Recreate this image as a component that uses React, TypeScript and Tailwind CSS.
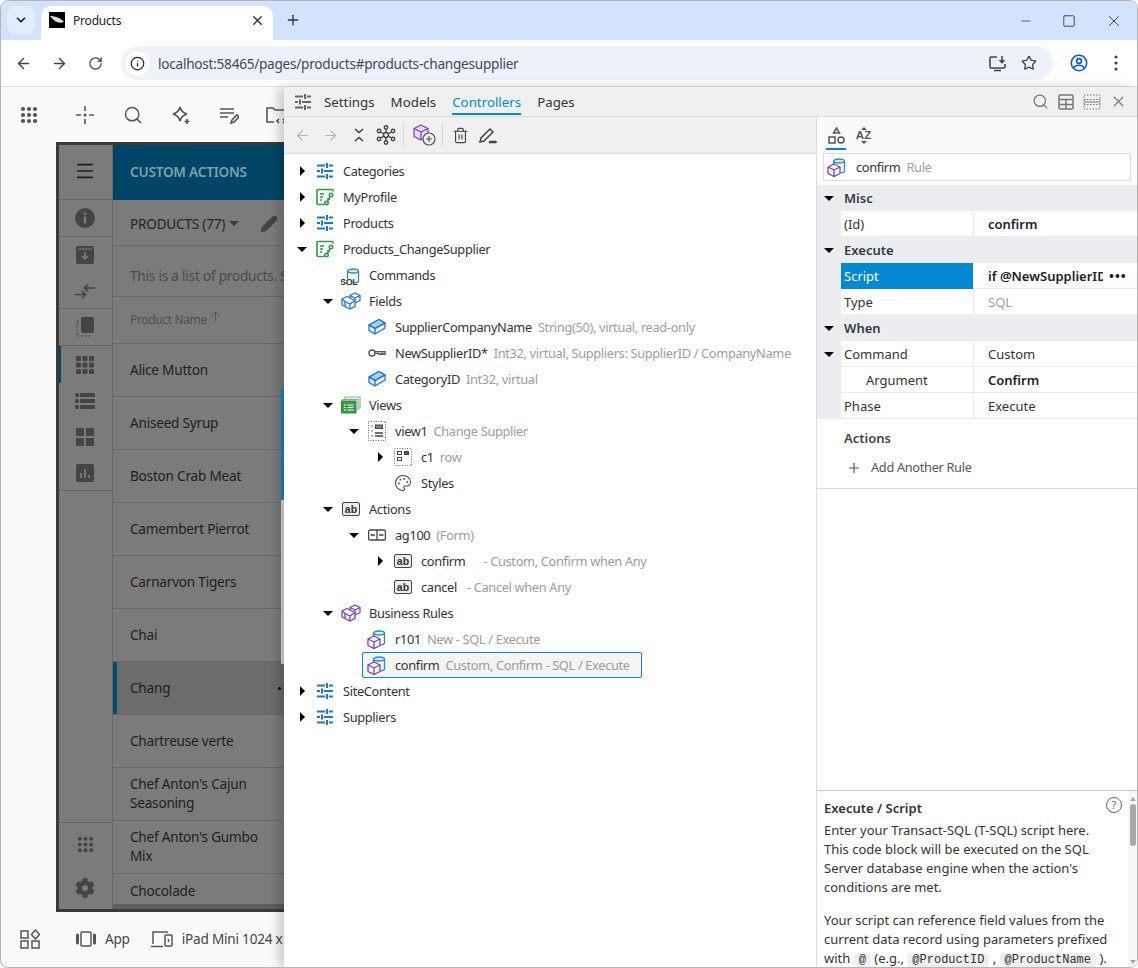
import React from "react";
import { ArrowLeft, ArrowRight, RotateCw, Info, Star, X, Plus, ChevronDown, Minus, Square, Search, Palette, Trash2, Menu, Pencil, ArrowUp } from "lucide-react";
import { FaCog } from "react-icons/fa";

const Slider = ({ c = "#1b76c9" }: { c?: string }) => (
  <svg width="18" height="18" viewBox="0 0 18 18" fill="none" stroke={c} strokeWidth="2">
    <path d="M1 3.500h8M13 3.500h4M11 1v5M1 9h3M8 9h9M6 6.500v5M1 14.500h8M13 14.500h4M11 12v5" />
  </svg>
);
const Ctrl = () => (
  <svg width="18" height="18" viewBox="0 0 18 18" fill="none" stroke="#2e9a3c" strokeWidth="1.600">
    <path d="M8 16.500H2a1 1 0 0 1-1-1v-13a1 1 0 0 1 1-1h14a1 1 0 0 1 1 1v1" />
    <path d="M4 6h4M4 9h3M4 12h2" />
    <circle cx="15" cy="7" r="1.700" /><circle cx="10.500" cy="15" r="1.700" /><path d="M14 8.500l-2.500 5M11 11h3" />
  </svg>
);
const Cyl = ({ c = "#2b8db5", y = 0 }: { c?: string; y?: number }) => (
  <g transform={`translate(0 ${y})`} fill="none" stroke={c} strokeWidth="1.300">
    <ellipse cx="12" cy="3" rx="5.500" ry="2" fill="#d4e9f3" />
    <path d="M6.500 3v8M17.500 3v10c0 1-1 1.600-4 1.800" />
  </g>
);
const SqlIcon = () => (
  <svg width="20" height="20" viewBox="0 0 20 20" className="shrink-0">
    <Cyl y={3} />
    <text x="-1" y="19.500" fontSize="9" fontWeight="600" fill="#333" fontFamily="Liberation Sans, sans-serif">SQL</text>
  </svg>
);
const Cube = ({ x = 0, y = 0, c, f = "none" }: { x?: number; y?: number; c: string; f?: string }) => (
  <g transform={`translate(${x} ${y})`} fill="none" stroke={c} strokeWidth="1.300" strokeLinejoin="round">
    <path d="M6 0l6 3v6.500l-6 3-6-3V3z" fill={f} /><path d="M0 3l6 3 6-3M6 6v6.500" />
  </g>
);
const TwoCubes = ({ c, f }: { c: string; f: string }) => (
  <svg width="20" height="18" viewBox="0 0 20 18" className="shrink-0">
    <g fill={f} stroke={c} strokeWidth="1.300" strokeLinejoin="round">
      <path d="M9 3.500L14 1l5 2.500v5L14 11l-5-2.500z" />
      <path d="M1 7l5-2.500L9 6l5 2.500v6L9 17l-5-2.500L1 13z" />
      <path d="M4 9.500l5 2.500 5-3.500M9 12v5M1 7l3 2.500v5M9 3.500l5 2.500 5-2.500M14 6v2.500" fill="none" />
    </g>
  </svg>
);
const FieldIcon = () => (
  <svg width="18" height="18" viewBox="0 0 18 18" fill="none" stroke="#1b76c9" strokeWidth="1.300" strokeLinejoin="round" className="shrink-0">
    <path d="M1 7l10-5.500 6 3.500v5L7 16l-6-3.500z" fill="#e3effa" />
    <path d="M1 7l10-5.500 6 3.500-10 5.500z" fill="#a9cdf0" />
    <path d="M1 7l6 3.500L17 5M7 10.500V16" />
  </svg>
);
const KeyIcon = () => (
  <svg width="18" height="18" viewBox="0 0 18 18" fill="none" stroke="#555" strokeWidth="1.400" className="shrink-0">
    <circle cx="4" cy="9" r="3" />
    <path d="M7 7.600h10v2.800h-2v-1h-1.500v1H11v-1H7" />
  </svg>
);
const ViewsIcon = () => (
  <svg width="20" height="18" viewBox="0 0 20 18" fill="none" className="shrink-0">
    <path d="M4 3V1h15v11h-2" stroke="#74b57c" strokeWidth="1.100" />
    <path d="M2 5V3.500h15V14" stroke="#74b57c" strokeWidth="1.100" />
    <rect x="0.500" y="5" width="14.500" height="12" fill="#3b9a46" stroke="#2e8a3a" />
    <path d="M3 9h2M6.500 9h6M3 11.500h2M6.500 11.500h6M3 14h2M6.500 14h6" stroke="#fff" strokeWidth="1.200" />
  </svg>
);
const ViewIcon = () => (
  <svg width="18" height="20" viewBox="0 0 18 20" fill="none" stroke="#444" className="shrink-0">
    <rect x="0.500" y="0.500" width="17" height="19" strokeDasharray="1 1.500" stroke="#666" />
    <path d="M3.500 5h1M3.500 10h1M3.500 15h1M7 12h8M7 15h8" strokeWidth="1.300" />
    <rect x="7.500" y="4" width="7" height="3.500" fill="#888" stroke="#444" />
  </svg>
);
const RowIcon = () => (
  <svg width="18" height="18" viewBox="0 0 18 18" fill="none" stroke="#444" className="shrink-0">
    <rect x="0.500" y="0.500" width="17" height="17" strokeDasharray="1 1.500" stroke="#777" />
    <rect x="3.500" y="3.500" width="4" height="3" /><rect x="10.500" y="3.500" width="4" height="3" fill="#555" /><rect x="3.500" y="9.500" width="4" height="3" />
  </svg>
);
const AbIcon = () => (
  <span className="w-[18px] h-[14px] shrink-0 rounded-[2px] border-[1.5px] border-[#444] bg-[#ececec] flex items-center justify-center text-[10.500px] leading-none font-semibold text-[#333] font-['Liberation_Sans',sans-serif] tracking-normal">ab</span>
);
const GroupIcon = () => (
  <svg width="18" height="12" viewBox="0 0 18 12" fill="none" stroke="#444" strokeWidth="1.300" className="shrink-0">
    <rect x="0.600" y="1" width="16.800" height="10" rx="1.500" /><path d="M9 1v10M2.500 6h4.500M11 6h4.500" />
  </svg>
);
const RuleIcon = () => (
  <svg width="20" height="20" viewBox="0 0 20 20" className="shrink-0">
    <Cyl y={1} />
    <Cube x={1} y={7} c="#7b3fb8" f="#fff" />
  </svg>
);
const PaletteIcon = () => <Palette size={18} color="#444" strokeWidth={1.400} className="shrink-0" />;

const Tri = ({ open, hide }: { open?: boolean; hide?: boolean }) => (
  <span className="w-3 h-3 flex items-center justify-center shrink-0">
    {hide ? null : open ? (
      <span className="w-0 h-0 border-l-[5px] border-r-[5px] border-t-[5px] border-l-transparent border-r-transparent border-t-black" />
    ) : (
      <span className="w-0 h-0 border-t-[5px] border-b-[5px] border-l-[5px] border-t-transparent border-b-transparent border-l-black" />
    )}
  </span>
);

type Node = { l: number; t?: "o" | "c"; i: React.ReactNode; n: string; d?: string; sel?: boolean; gap?: string };
const tree: Node[] = [
  { l: 0, t: "c", i: <Slider />, n: "Categories" },
  { l: 0, t: "c", i: <Ctrl />, n: "MyProfile" },
  { l: 0, t: "c", i: <Slider />, n: "Products" },
  { l: 0, t: "o", i: <Ctrl />, n: "Products_ChangeSupplier" },
  { l: 1, i: <SqlIcon />, n: "Commands" },
  { l: 1, t: "o", i: <TwoCubes c="#1b76c9" f="#fff" />, n: "Fields" },
  { l: 2, i: <FieldIcon />, n: "SupplierCompanyName", d: "String(50), virtual, read-only" },
  { l: 2, i: <KeyIcon />, n: "NewSupplierID*", d: "Int32, virtual, Suppliers: SupplierID / CompanyName" },
  { l: 2, i: <FieldIcon />, n: "CategoryID", d: "Int32, virtual" },
  { l: 1, t: "o", i: <ViewsIcon />, n: "Views" },
  { l: 2, t: "o", i: <ViewIcon />, n: "view1", d: "Change Supplier" },
  { l: 3, t: "c", i: <RowIcon />, n: "c1", d: "row" },
  { l: 3, i: <PaletteIcon />, n: "Styles" },
  { l: 1, t: "o", i: <AbIcon />, n: "Actions" },
  { l: 2, t: "o", i: <GroupIcon />, n: "ag100", d: "(Form)" },
  { l: 3, t: "c", i: <AbIcon />, n: "confirm", d: "- Custom, Confirm when Any", gap: "ml-[18px]" },
  { l: 3, i: <AbIcon />, n: "cancel", d: "- Cancel when Any", gap: "ml-[10px]" },
  { l: 1, t: "o", i: <TwoCubes c="#7b3fb8" f="#fff" />, n: "Business Rules" },
  { l: 2, i: <RuleIcon />, n: "r101", d: "New - SQL / Execute" },
  { l: 2, i: <RuleIcon />, n: "confirm", d: "Custom, Confirm - SQL / Execute", sel: true },
  { l: 0, t: "c", i: <Slider />, n: "SiteContent" },
  { l: 0, t: "c", i: <Slider />, n: "Suppliers" },
];
const indent = ["ml-[12px]", "ml-[38px]", "ml-[64px]", "ml-[90px]"];

function TreeRow({ node }: { node: Node }) {
  return (
    <div className={`h-[26px] flex items-center ${indent[node.l]}`}>
      <Tri open={node.t === "o"} hide={!node.t} />
      <div className={`flex items-center h-[26px] ml-[2px] rounded-[2px] box-border ${node.sel ? "border border-[#0f88c9] bg-[#f4f4f4] w-[280px] pl-[5px]" : "pl-[6px] pr-2 w-fit"}`}>
        <span className="w-[18px] h-[20px] flex items-center justify-center shrink-0">{node.i}</span>
        <span className="ml-[9px] text-[#333] whitespace-nowrap">{node.n}</span>
        {node.d && <span className={`${node.gap ?? "ml-[6px]"} text-[#9c9c9c] whitespace-nowrap`}>{node.d}</span>}
      </div>
    </div>
  );
}

const Section = ({ t }: { t: string }) => (
  <div className="h-[26px] flex items-center bg-[#ecedf1]">
    <span className="w-[24px] flex justify-center"><Tri open /></span>
    <span className="ml-[3px] font-semibold text-[#333a45]">{t}</span>
  </div>
);
const Prop = ({ n, v, bold, gray, sel, tri, pad }: { n: string; v: React.ReactNode; bold?: boolean; gray?: boolean; sel?: boolean; tri?: boolean; pad?: boolean }) => (
  <div className="h-[26px] flex bg-[#ecedf1]">
    <span className="w-[24px] flex justify-center items-center">{tri && <Tri open />}</span>
    <div className={`w-[132px] flex items-center ${pad ? "pl-[25px]" : "pl-[3px]"} ${sel ? "bg-[#0288d1] text-white" : "bg-white text-[#333] pt-px border-b border-[#ecedf1]"}`}>{n}</div>
    <div className={`flex-1 ml-px flex items-center pl-[14px] pt-px bg-white border-b border-[#ecedf1] ${bold ? "font-semibold text-[#222]" : gray ? "text-[#a0a0a0]" : "text-[#333]"}`}>{v}</div>
  </div>
);

const Grid9 = ({ c = "#555", s = 18 }: { c?: string; s?: number }) => (
  <svg width={s} height={s} viewBox="0 0 18 18" fill={c}>
    {[3, 9, 15].map((y) => [3, 9, 15].map((x) => <circle key={`${x}${y}`} cx={x} cy={y} r="2.100" />))}
  </svg>
);

const rows = ["Alice Mutton", "Aniseed Syrup", "Boston Crab Meat", "Camembert Pierrot", "Carnarvon Tigers", "Chai", "Chang", "Chartreuse verte", "Chef Anton's Cajun Seasoning", "Chef Anton's Gumbo Mix"];

const SideIcon = ({ h, children, line, active }: { h: number; children: React.ReactNode; line?: boolean; active?: boolean }) => (
  <div className={`flex items-center justify-center relative shrink-0 pr-px ${line ? "border-b border-[#686868]" : ""}`} style={{ height: h }}>
    {active && <span className="absolute left-0 top-0 bottom-0 w-[2px] bg-[#004565]" />}
    {children}
  </div>
);
const D = "#444";

export default function App() {
  return (
    <div className="relative w-[1138px] h-[968px] overflow-hidden bg-[#fafafa] border border-[#b5b5b5] rounded-[8px] box-border font-['Noto_Sans',sans-serif] text-[13px] leading-[19px] flex flex-col">
      {/* tab strip */}
      <div className="h-[39px] bg-[#d3e3fd] flex shrink-0 pt-[5px]">
        <div className="ml-[6px] w-[28px] h-[28px] rounded-[8px] bg-[#e4edfc] flex items-center justify-center"><ChevronDown size={14} strokeWidth={3} color="#222" /></div>
        <div className="ml-[6px] w-[232px] h-[34px] rounded-t-[10px] bg-white flex items-center pl-[8px] pr-[8px] pb-[6px]">
          <svg width="16" height="16" viewBox="0 0 16 16"><rect width="16" height="16" fill="#000" /><path d="M1 4c5 0 11 2 14 6-3 1-5 1-7 0C5 9 3 6 1 4z" fill="#ddd" /></svg>
          <span className="ml-[8px] text-[12px] tracking-[-0.2px] text-[#222]">Products</span>
          <X size={15} strokeWidth={2.200} color="#333" className="ml-auto" />
        </div>
        <Plus size={16} strokeWidth={2} color="#333" className="ml-[12px] mt-[6px]" />
        <div className="ml-auto flex items-center h-[30px] mr-[14px] gap-[29px]">
          <Minus size={14} strokeWidth={1.200} color="#222" />
          <Square size={14} strokeWidth={1.300} color="#222" />
          <X size={18} strokeWidth={1.100} color="#222" />
        </div>
      </div>
      {/* address bar */}
      <div className="h-[47px] bg-white border-b border-[#e0e0e0] flex items-center shrink-0 relative">
        <ArrowLeft size={17} strokeWidth={2} color="#444" className="ml-[14px]" />
        <ArrowRight size={17} strokeWidth={2} color="#444" className="ml-[19px]" />
        <RotateCw size={15} strokeWidth={2} color="#444" className="ml-[20px]" />
        <div className="ml-[18px] w-[932px] h-[34px] rounded-full bg-[#edf2fa] flex items-center pl-[4px] pr-[16px]">
          <span className="w-[25px] h-[25px] rounded-full bg-white flex items-center justify-center"><Info size={15} strokeWidth={2} color="#222" /></span>
          <span className="ml-[8px] text-[13.600px] tracking-[-0.25px] text-[#3c4a5c]">localhost:58465/pages/products#products-changesupplier</span>
          <svg className="ml-auto" width="17" height="17" viewBox="0 0 17 17" fill="none" stroke="#444" strokeWidth="1.600"><path d="M8 2H2a1 1 0 0 0-1 1v9a1 1 0 0 0 1 1h13a1 1 0 0 0 1-1V9M5 15.500h7M13 1v6M10.500 5l2.500 2.500L15.500 5" /></svg>
          <Star size={16} strokeWidth={2} color="#444" className="ml-[15px]" />
        </div>
        <svg className="ml-[17px]" width="18" height="18" viewBox="0 0 18 18" fill="none" stroke="#0b57d0" strokeWidth="1.600"><circle cx="9" cy="9" r="7.700" /><circle cx="9" cy="7" r="2.400" /><path d="M3.800 14c1-2 3-2.700 5.200-2.700s4.200.7 5.200 2.700" /></svg>
        <svg className="ml-[26px]" width="4" height="16" viewBox="0 0 4 16" fill="#444"><circle cx="2" cy="2" r="1.600" /><circle cx="2" cy="8" r="1.600" /><circle cx="2" cy="14" r="1.600" /></svg>
      </div>

      {/* page below the panel */}
      <div className="flex-1 flex flex-col min-h-0">
        <div className="h-[55px] shrink-0 flex items-center pl-[19px] text-[#555]">
          <Grid9 />
          <svg className="ml-[37px]" width="20" height="20" viewBox="0 0 20 20" stroke="#555" strokeWidth="1.600" fill="#555"><path d="M10 1v5M10 14v5M1 10h5M14 10h5" /><circle cx="10" cy="10" r="0.800" /></svg>
          <Search size={20} strokeWidth={1.800} color="#555" className="ml-[28px]" />
          <svg className="ml-[28px]" width="20" height="20" viewBox="0 0 20 20" fill="none" stroke="#555" strokeWidth="1.700"><path d="M9 2c1 4 3 6 7 7-4 1-6 3-7 7-1-4-3-6-7-7 4-1 6-3 7-7z" /><path d="M16 14v5M13.500 16.500h5" /></svg>
          <svg className="ml-[28px]" width="20" height="20" viewBox="0 0 20 20" fill="none" stroke="#555" strokeWidth="1.600"><path d="M1 4h14M1 8h14M1 12h8M12 18l1-3 5-5 2 2-5 5z" /></svg>
          <svg className="ml-[26px]" width="22" height="20" viewBox="0 0 22 20" fill="none" stroke="#555" strokeWidth="1.600"><path d="M9 17H2V3h6l2 2h10v4M14 14l-2 2 2 2M18 14l2 2-2 2" /></svg>
        </div>
        <div className="ml-[55px] w-[300px] h-[770px] shrink-0 border-[3px] border-[#3a3a3a] flex bg-[#7b7b7b] overflow-hidden">
          {/* sidebar */}
          <div className="w-[54px] shrink-0 flex flex-col border-r border-[#686868]">
            <SideIcon h={55} line><Menu size={22} color="#1f1f1f" strokeWidth={1.800} className="-mt-[2px]" /></SideIcon>
            <SideIcon h={37} line><svg width="20" height="20" viewBox="0 0 20 20"><circle cx="10" cy="10" r="10" fill={D} /><rect x="8.800" y="8.500" width="2.400" height="7" fill="#7b7b7b" /><rect x="8.800" y="4.500" width="2.400" height="2.400" fill="#7b7b7b" /></svg></SideIcon>
            <SideIcon h={36}><svg width="18" height="18" viewBox="0 0 18 18"><rect width="18" height="18" rx="2" fill={D} /><path d="M2 3h14" stroke="#7b7b7b" /><path d="M9 6v7M6 10l3 3 3-3" stroke="#7b7b7b" strokeWidth="1.600" fill="none" /></svg></SideIcon>
            <SideIcon h={36} line><svg width="20" height="16" viewBox="0 0 20 16" fill="none" stroke={D} strokeWidth="1.700"><path d="M0 11.500h10M7 8l3.500 3.500L7 15M20 5H10M13 1.500L9.500 5 13 8.500" /></svg></SideIcon>
            <SideIcon h={37} line><svg width="18" height="20" viewBox="0 0 18 20"><rect x="5" y="0" width="13" height="16" rx="2" fill={D} /><path d="M3 4H1v15h13v-1" stroke={D} strokeDasharray="2 1.500" fill="none" /></svg></SideIcon>
            <SideIcon h={37} active><svg width="18" height="18" viewBox="0 0 18 18" fill={D}>{[0, 6.500, 13].map((y) => [0, 6.500, 13].map((x) => <rect key={`${x}-${y}`} x={x} y={y} width="5" height="5" rx="1" />))}</svg></SideIcon>
            <SideIcon h={36}><svg width="20" height="16" viewBox="0 0 20 16" fill={D}><rect width="4" height="4" rx="1.500" /><rect x="5" width="15" height="4" rx="1" /><rect y="6" width="4" height="4" rx="1.500" /><rect x="5" y="6" width="15" height="4" rx="1" /><rect y="12" width="4" height="4" rx="1.500" /><rect x="5" y="12" width="15" height="4" rx="1" /></svg></SideIcon>
            <SideIcon h={36}><svg width="18" height="18" viewBox="0 0 18 18" fill={D}><rect width="8" height="8" /><rect x="10" width="8" height="8" /><rect y="10" width="8" height="8" /><rect x="10" y="10" width="8" height="8" /></svg></SideIcon>
            <SideIcon h={36} line><svg width="18" height="18" viewBox="0 0 18 18"><rect width="18" height="18" rx="2" fill={D} /><path d="M5 9v5M9 5v9M13 11v3" stroke="#7b7b7b" strokeWidth="1.800" /></svg></SideIcon>
            <div className="flex-1 border-b border-[#686868]" />
            <SideIcon h={43}><Grid9 c={D} s={17} /></SideIcon>
            <SideIcon h={43}><FaCog size={20} color={D} /></SideIcon>
          </div>
          {/* list */}
          <div className="flex-1 min-w-0 flex flex-col text-[13.600px] tracking-[-0.22px]">
            <div className="h-[55px] shrink-0 bg-[#004565] flex items-center pl-[17px] pb-[2px] text-[#7fa0b0] font-semibold whitespace-nowrap">CUSTOM ACTIONS</div>
            <div className="h-[46px] shrink-0 flex items-center pl-[17px] pt-[2px] text-[#262626] whitespace-nowrap border-b border-[#696969]">PRODUCTS (77)
              <span className="ml-[4px] w-0 h-0 border-l-[5px] border-r-[5px] border-t-[5px] border-l-transparent border-r-transparent border-t-[#3a3a3a]" />
              <Pencil size={18} fill={D} color={D} className="ml-[21px]" />
            </div>
            <div className="h-[51px] shrink-0 flex items-center pl-[17px] pt-[8px] text-[#4a4a4a] whitespace-nowrap border-b border-[#696969]">This is a list of products. Select a product</div>
            <div className="h-[47px] shrink-0 flex items-center pl-[17px] pb-[2px] text-[#4f4f4f] text-[12px] tracking-[-0.35px] whitespace-nowrap border-b border-[#696969]">Product Name<ArrowUp size={15} color="#555" strokeWidth={1.500} className="ml-[1px] -mt-[5px]" /></div>
            {rows.map((r) => (
              <div key={r} className={`h-[53px] shrink-0 flex items-center pl-[17px] pb-[2px] leading-[19px] text-[#1e1e1e] border-b border-[#696969] relative ${r === "Chang" ? "bg-[#6c6c6c]" : ""}`}>
                {r === "Chang" && <span className="absolute left-0 top-0 bottom-0 w-[4px] bg-[#004d70]" />}
                <span className="w-[138px] shrink-0">{r}</span>
                {r === "Chang" && <span className="absolute left-[165px] top-[25px] w-[3px] h-[3px] rounded-full bg-black" />}
              </div>
            ))}
            <div className="flex-1 min-h-0 pl-[17px] pt-[7px] text-[#1e1e1e] border-b-[5px] border-[#5e5e5e]">Chocolade</div>
          </div>
        </div>
        {/* status bar */}
        <div className="flex-1 flex items-center pl-[19px] text-[13.600px] tracking-[-0.22px] text-[#444] whitespace-nowrap -mt-[2px]">
          <svg width="20" height="20" viewBox="0 0 20 20" fill="none" stroke="#555" strokeWidth="1.500"><rect x="1" y="2" width="7" height="7" /><rect x="1" y="12" width="7" height="7" /><rect x="12" y="12" width="7" height="7" /><path d="M15.500 1l4 4.500-4 4.500-4-4.500z" /></svg>
          <svg className="ml-[35px]" width="22" height="18" viewBox="0 0 22 18" fill="none" stroke="#555" strokeWidth="1.500"><rect x="6" y="2" width="10" height="14" rx="1" /><path d="M2.500 5v8M19.500 5v8" strokeWidth="3" strokeLinecap="round" /></svg>
          <span className="ml-[8px]">App</span>
          <svg className="ml-[21px]" width="22" height="18" viewBox="0 0 22 18" fill="none" stroke="#555" strokeWidth="1.500"><path d="M2 14V2h14v1M0 16.500h12" /><rect x="14" y="5" width="7" height="11" rx="1" /><path d="M17.500 9v3" /></svg>
          <span className="ml-[9px]">iPad Mini 1024 x 768</span>
        </div>
      </div>

      {/* dialog edge showing beside the panel */}
      <div className="absolute left-[280px] top-[388px] w-[3px] h-[111px] bg-[#0f88c9]" />
      <div className="absolute left-[280px] top-[499px] w-[3px] h-[164px] bg-[#d9d9d9]" />

      {/* designer panel */}
      <div className="absolute left-[283px] top-[86px] bottom-0 right-0 bg-white flex flex-col shadow-[-6px_0_10px_rgba(0,0,0,0.18)] text-[13px]">
        <div className="h-[30px] shrink-0 bg-[#f0f0f0] border-b border-[#dcdcdc] flex items-center">
          <span className="ml-[10px]"><Slider c="#666" /></span>
          <div className="ml-[12px] flex gap-[16px] h-full items-center pt-px text-[#333] text-[13.300px]">
            <span>Settings</span>
            <span>Models</span>
            <span className="text-[#0288d1] border-b-2 border-[#0288d1] h-[22px] mt-[4px]">Controllers</span>
            <span>Pages</span>
          </div>
          <div className="ml-auto flex items-center mr-[10px] gap-[9px]">
            <Search size={17} color="#777" strokeWidth={1.800} />
            <svg width="16" height="16" viewBox="0 0 16 16" fill="none" stroke="#777" strokeWidth="1.500"><rect x="1" y="1" width="14" height="14" rx="1" /><path d="M1 5.500h14M1 10.500h14M8 5.500V15" /></svg>
            <svg width="18" height="16" viewBox="0 0 18 16" fill="none" stroke="#777"><rect x="1" y="1" width="16" height="14" strokeDasharray="1.500 1.500" /><path d="M1 5.500h16M1 10.500h16" strokeDasharray="1.500 1.500" /><path d="M1 8h16" /></svg>
            <X size={17} color="#777" strokeWidth={1.600} />
          </div>
        </div>
        <div className="flex-1 flex min-h-0">
          {/* tree side */}
          <div className="w-[532px] shrink-0 flex flex-col">
            <div className="h-[37px] shrink-0 bg-[#f0f0f0] border-b border-[#dcdcdc] flex items-center pl-[10px]">
              <ArrowLeft size={17} color="#b4b4b4" strokeWidth={1.600} />
              <ArrowRight size={17} color="#b4b4b4" strokeWidth={1.600} className="ml-[11px]" />
              <svg className="ml-[14px]" width="12" height="14" viewBox="0 0 12 14" fill="none" stroke="#444" strokeWidth="1.600"><path d="M2 1l4 3.500L10 1M2 13l4-3.500L10 13" /></svg>
              <svg className="ml-[11px]" width="20" height="20" viewBox="0 0 20 20" fill="none" stroke="#444" strokeWidth="1.400"><circle cx="10" cy="10" r="2.500" /><circle cx="10" cy="2.500" r="1.700" /><circle cx="10" cy="17.500" r="1.700" /><circle cx="3" cy="6" r="1.700" /><circle cx="17" cy="6" r="1.700" /><circle cx="3" cy="14" r="1.700" /><circle cx="17" cy="14" r="1.700" /><path d="M10 4.500v3M10 12.500v3M4.500 7l3.500 2M15.500 7L12 9M4.500 13l3.500-2M15.500 13L12 11" /></svg>
              <span className="ml-[7px] w-px h-[24px] bg-[#d8d8d8]" />
              <svg className="ml-[9px]" width="23" height="22" viewBox="0 0 23 22" fill="none" strokeLinejoin="round"><path d="M8 1l7 3.500v8L8 16l-7-3.500v-8z" fill="#e6d9f4" stroke="#7b3fb8" strokeWidth="1.200" /><path d="M1 4.500L8 8l7-3.500M8 8v8" stroke="#7b3fb8" strokeWidth="1.200" /><circle cx="16" cy="15" r="6" fill="#f0f0f0" stroke="#555" strokeWidth="1.200" /><path d="M16 12v6M13 15h6" stroke="#555" strokeWidth="1.200" /></svg>
              <span className="ml-[6px] w-px h-[24px] bg-[#d8d8d8]" />
              <Trash2 size={17} color="#444" strokeWidth={1.600} className="ml-[9px]" />
              <svg className="ml-[10px]" width="18" height="18" viewBox="0 0 18 18" fill="none" stroke="#444" strokeWidth="1.500"><path d="M1 16l1-4L11 3l3 3-9 9zM10 16h8" /><path d="M10 16h7" strokeWidth="2.500" /></svg>
            </div>
            <div className="flex-1 bg-white pt-[4px] text-[12.800px] tracking-[-0.33px]">
              {tree.map((n, i) => <TreeRow key={i} node={n} />)}
            </div>
          </div>
          {/* property side */}
          <div className="flex-1 min-w-0 border-l border-[#dcdcdc] bg-white flex flex-col">
            <div className="h-[36px] shrink-0 bg-[#fafafa] flex items-start pl-[9px]">
              <div className="w-[20px] h-[33px] border-b-2 border-[#0288d1] flex items-end justify-center pb-[3px]">
                <svg width="17" height="18" viewBox="0 0 17 18" fill="none" stroke="#555" strokeWidth="1.500"><path d="M8.500 1l3 5h-6z" /><rect x="1" y="10" width="6" height="6" /><circle cx="13" cy="13" r="3" /></svg>
              </div>
              <div className="ml-[9px] mt-[10px] w-[17px] flex flex-col items-center">
                <span className="w-0 h-0 border-l-[3px] border-r-[3px] border-b-[3px] border-l-transparent border-r-transparent border-b-[#555]" />
                <span className="text-[11.500px] leading-[11px] font-bold text-[#555] font-['Liberation_Sans',sans-serif]">AZ</span>
                <span className="w-0 h-0 border-l-[3px] border-r-[3px] border-t-[3px] border-l-transparent border-r-transparent border-t-[#555]" />
              </div>
            </div>
            <div className="ml-[6px] mr-[6px] h-[28px] shrink-0 border border-[#dcdcdc] flex items-center pl-[3px] text-[12.800px] tracking-[-0.33px]">
              <RuleIcon />
              <span className="ml-[9px] text-[#333]">confirm</span>
              <span className="ml-[6px] text-[#a0a0a0]">Rule</span>
            </div>
            <div className="mt-[4px] shrink-0">
              <Section t="Misc" />
              <Prop n="(Id)" v="confirm" bold />
              <Section t="Execute" />
              <Prop n="Script" sel bold v={<span className="flex items-center"><span className="w-[115px] overflow-hidden whitespace-nowrap">if @NewSupplierID = 1</span><span className="ml-[6px] tracking-[1px] text-[#222] text-[13px] font-bold leading-none">•••</span></span>} />
              <Prop n="Type" v="SQL" gray />
              <Section t="When" />
              <Prop n="Command" v="Custom" tri />
              <Prop n="Argument" v="Confirm" bold pad />
              <Prop n="Phase" v="Execute" />
            </div>
            <div className="h-[70px] shrink-0 border-b border-[#dcdcdc] pl-[27px] pt-[10px] text-[#333]">
              <div className="font-semibold text-[#444]">Actions</div>
              <div className="flex items-center mt-[10px] ml-[2px] text-[#555] text-[12.800px] tracking-[-0.33px]"><Plus size={16} strokeWidth={1.800} color="#555" /><span className="ml-[9px]">Add Another Rule</span></div>
            </div>
            <div className="flex-1" />
            <div className="h-[177px] shrink-0 border-t border-[#c8c8c8] relative overflow-hidden pl-[7px] pt-[8px] pr-[22px] text-[#333]">
              <div className="font-semibold text-[#333]">Execute / Script</div>
              <p className="mt-[3px]">Enter your Transact-SQL (T-SQL) script here. This code block will be executed on the SQL Server database engine when the action's conditions are met.</p>
              <p className="mt-[14px] whitespace-nowrap">Your script can reference field values from the<br />current data record using parameters prefixed<br />with <code className="bg-[#eeeeee] rounded-[4px] px-[5px] font-['Liberation_Mono',monospace] text-[12px]">@</code> (e.g., <code className="bg-[#eeeeee] rounded-[4px] px-[5px] font-['Liberation_Mono',monospace] text-[12px]">@ProductID</code> , <code className="bg-[#eeeeee] rounded-[4px] px-[5px] font-['Liberation_Mono',monospace] text-[12px]">@ProductName</code> ).</p>
              <span className="absolute right-[15px] top-[6px] w-[16px] h-[16px] rounded-full border-[1.500px] border-[#666] text-[11px] leading-[13px] text-center text-[#666]">?</span>
              <div className="absolute right-0 top-0 bottom-0 w-[9px] bg-[#f8f8f8] flex flex-col items-center pt-[6px]">
                <span className="w-0 h-0 border-l-[3px] border-r-[3px] border-b-[4px] border-l-transparent border-r-transparent border-b-[#a8a8a8]" />
                <span className="mt-[3px] w-[6px] h-[42px] rounded-[3px] bg-[#a8a8a8]" />
                <span className="mt-auto mb-[3px] w-0 h-0 border-l-[3px] border-r-[3px] border-t-[4px] border-l-transparent border-r-transparent border-t-[#a8a8a8]" />
              </div>
            </div>
          </div>
        </div>
      </div>
    </div>
  );
}
